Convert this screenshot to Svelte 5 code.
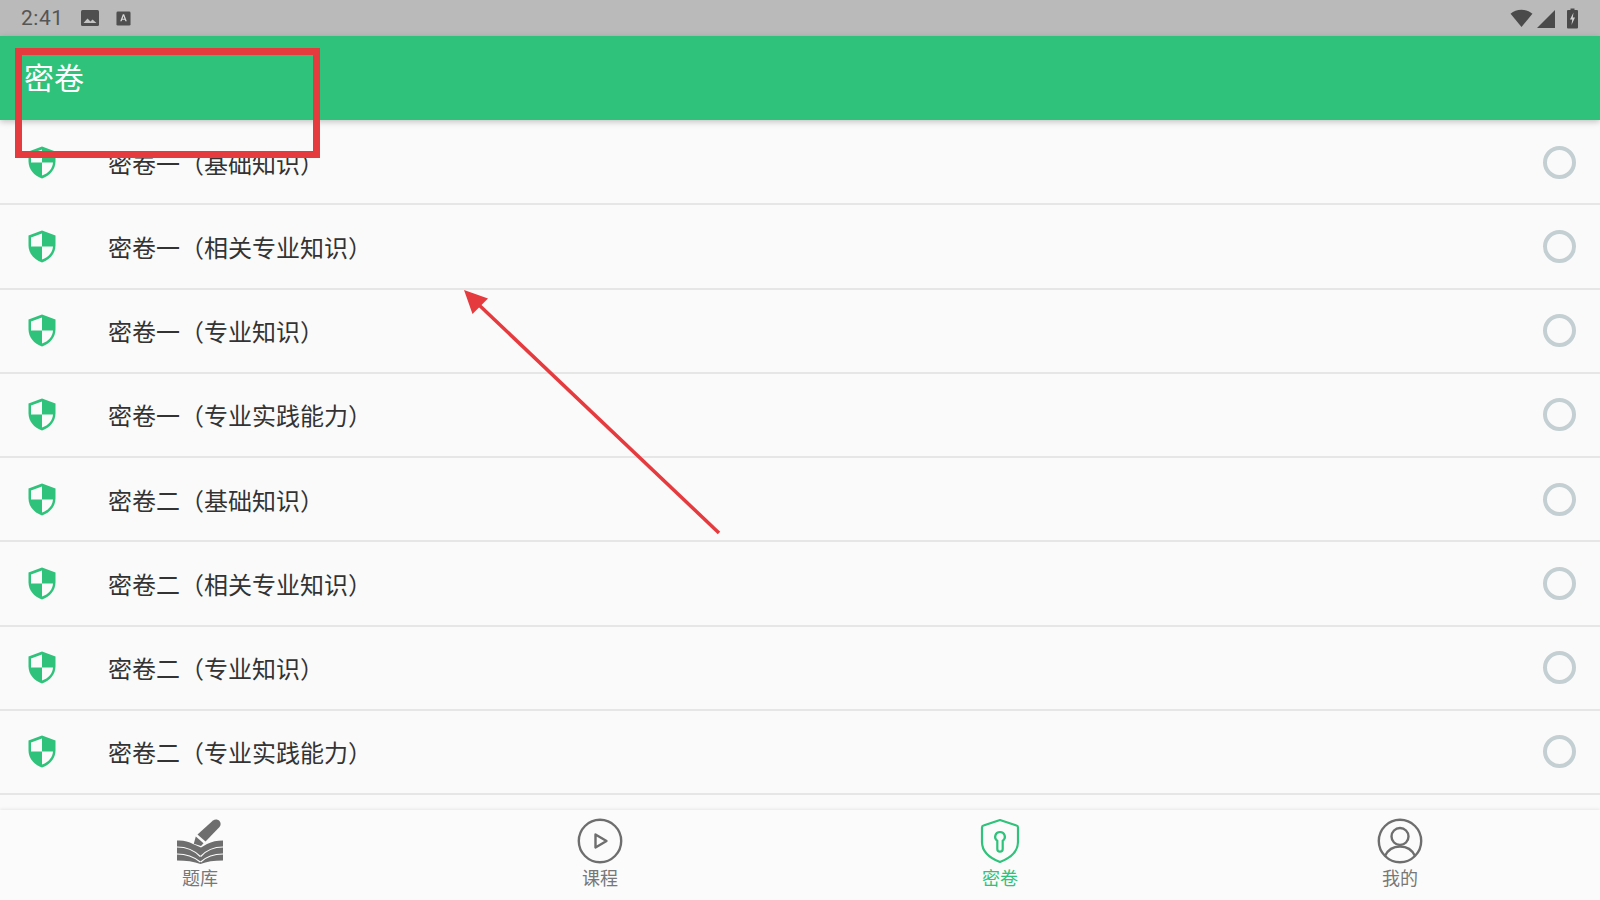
<script>
	const papers = [
		"密卷一（基础知识）",
		"密卷一（相关专业知识）",
		"密卷一（专业知识）",
		"密卷一（专业实践能力）",
		"密卷二（基础知识）",
		"密卷二（相关专业知识）",
		"密卷二（专业知识）",
		"密卷二（专业实践能力）",
	];
</script>

<div class="screen">
	<div class="status">
		<span class="time">2:41</span>
		<svg class="s-img" viewBox="0 0 18 18">
			<rect width="18" height="16" y="1" rx="1.5" fill="#4f4f4f" />
			<path d="M2.5 14l4-4.5 3 3 2-2 4 3.500z" fill="#c4c4c4" />
		</svg>
		<svg class="s-a" viewBox="0 0 16 16">
			<rect width="15" height="15" x="0.5" y="0.5" rx="1.500" fill="#4f4f4f" />
			<path d="M4.500 11L7.300 3.500h1.400L11.500 11h-1.500L9.400 9.400H6.600L6 11zM7 8.200h2L8 5.300z" fill="#d8d8d8" />
		</svg>
		<span class="grow"></span>
		<svg class="s-wifi" viewBox="0 0 24 20">
			<path d="M0.500 5C3.500 2.200 7.500 0.800 12 0.800S20.500 2.200 23.500 5L12 19z" fill="#4a4a4a" />
		</svg>
		<svg class="s-signal" viewBox="0 0 18 18">
			<path d="M0 18L18 0v18z" fill="#4a4a4a" />
		</svg>
		<svg class="s-batt" viewBox="0 0 11 20">
			<path d="M3.500 0h4v1.500H10a1 1 0 0 1 1 1V19a1 1 0 0 1-1 1H1a1 1 0 0 1-1-1V2.500a1 1 0 0 1 1-1h2.500z" fill="#4a4a4a" />
			<path d="M6.500 4L3 11h2.200L4.500 16.500 8 9H5.800z" fill="#d0d0d0" />
		</svg>
	</div>

	<header class="bar"><span>密卷</span></header>

	<ul class="list">
		{#each papers as paper}
			<li class="row">
				<svg class="shield" viewBox="0 0 28 33">
					<path d="M14 0.500L27.500 5.500V15C27.500 23.500 22 29.500 14 32.500C6 29.500 0.500 23.500 0.500 15V5.500z" fill="#2fc27a" />
					<path d="M14 3.500V16.500H3V7.500zM14 16.500H25C24.600 22.500 20.500 27.200 14 29.600z" fill="#fbfbfb" />
				</svg>
				<span class="name">{paper}</span>
				<span class="radio"></span>
			</li>
		{/each}
	</ul>

	<nav class="tabs">
		<div class="tab">
			<svg class="ico" viewBox="0 0 46 46">
				<path d="M36 2.500C38 1 41 1.300 42.500 3C44 4.800 44 7.300 42.500 9L28.500 23.500L20.500 16.500z" fill="#6e6e6e" />
				<path d="M18.800 18.500L26.500 25.300L24 28L16.800 25.800z" fill="#6e6e6e" />
				<path d="M0 22.500C6 22 11.500 23.500 16 26L24 29.500L30 26C35 23.500 40 22.500 46 22.500V42.500C37 42.500 29.500 43.500 23.500 46C17 43.500 9 42.500 0 42.500z" fill="#6e6e6e" />
				<path d="M0 29C9 29 17 32 23.300 38.500M46 29C37 29 29.500 32 23.700 38.500M0 36C8 36 16 38 23.300 44M46 36C38 36 30 38 23.700 44" fill="none" stroke="#fbfbfb" stroke-width="1.200" />
			</svg>
			<span>题库</span>
		</div>
		<div class="tab">
			<svg class="ico" viewBox="0 0 46 46">
				<circle cx="23" cy="23" r="21.200" fill="none" stroke="#6e6e6e" stroke-width="2.400" />
				<path d="M18.500 16.500L29.500 23L18.500 29.500z" fill="none" stroke="#6e6e6e" stroke-width="2.400" stroke-linejoin="round" />
			</svg>
			<span>课程</span>
		</div>
		<div class="tab active">
			<svg class="ico" viewBox="0 0 46 46">
				<path d="M23 2L39.500 7.500C40.500 7.800 41 8.500 41 9.500V24C41 33 33.500 40 23 44C12.500 40 5 33 5 24V9.500C5 8.500 5.500 7.800 6.500 7.500z" fill="none" stroke="#2fc27a" stroke-width="2.200" stroke-linejoin="round" />
				<path d="M23 14a4.800 4.800 0 0 1 2.700 8.800V31a2.700 2.700 0 0 1-5.400 0V22.800A4.800 4.800 0 0 1 23 14z" fill="none" stroke="#2fc27a" stroke-width="2.200" />
			</svg>
			<span>密卷</span>
		</div>
		<div class="tab">
			<svg class="ico" viewBox="0 0 46 46">
				<circle cx="23" cy="23" r="21.200" fill="none" stroke="#6e6e6e" stroke-width="2.400" />
				<circle cx="23" cy="18.500" r="8.500" fill="none" stroke="#6e6e6e" stroke-width="2.400" />
				<path d="M8 38C11 31.500 16 28.500 23 28.500S35 31.500 38 38" fill="none" stroke="#6e6e6e" stroke-width="2.400" />
			</svg>
			<span>我的</span>
		</div>
	</nav>

	<div class="note-box"></div>
	<svg class="note-arrow" viewBox="0 0 1600 900">
		<line x1="719" y1="533" x2="478" y2="304" stroke="#e53a3e" stroke-width="3.500" />
		<path d="M464 290L488 298.500L472.500 314z" fill="#e53a3e" />
	</svg>
</div>

<style>
	:global(body) {
		margin: 0;
	}
	.screen {
		position: relative;
		display: flex;
		flex-direction: column;
		width: 1600px;
		height: 900px;
		overflow: hidden;
		background: #fafafa;
		font-family: "Noto Sans CJK SC", "Noto Sans", sans-serif;
	}
	.status {
		display: flex;
		align-items: center;
		height: 36px;
		flex: none;
		padding: 0 22px 0 21px;
		background: #bababa;
		color: #555;
		box-sizing: border-box;
	}
	.time {
		font-family: Roboto, sans-serif;
		font-size: 21px;
		letter-spacing: 0.5px;
	}
	.s-img {
		width: 18px;
		height: 18px;
		margin-left: 17px;
	}
	.s-a {
		width: 15px;
		height: 15px;
		margin-left: 17px;
	}
	.grow {
		flex: 1;
	}
	.s-wifi {
		width: 23px;
		height: 19px;
	}
	.s-signal {
		width: 18px;
		height: 18px;
		margin-left: 4px;
		margin-top: 1px;
	}
	.s-batt {
		width: 11px;
		height: 21px;
		margin-left: 12px;
	}
	.bar {
		display: flex;
		align-items: center;
		flex: none;
		height: 84px;
		box-sizing: border-box;
		padding: 0 0 4px 24px;
		background: #2fc27a;
		color: #fff;
		font-size: 30px;
		box-shadow: 0 2px 6px rgba(0, 0, 0, 0.22);
		position: relative;
		z-index: 1;
	}
	.list {
		list-style: none;
		margin: 0;
		padding: 1px 0 0;
		flex: none;
	}
	.row {
		display: flex;
		align-items: center;
		height: 84.25px;
		box-sizing: border-box;
		padding: 0 24px 0 28px;
		border-bottom: 2px solid #e6e6e6;
	}
	.shield {
		width: 28px;
		height: 33px;
		flex: none;
	}
	.name {
		flex: 1;
		margin-left: 52px;
		font-size: 24px;
		color: #333;
	}
	.radio {
		width: 33px;
		height: 33px;
		flex: none;
		box-sizing: border-box;
		border: 4.5px solid #c3cfd2;
		border-radius: 50%;
	}
	.tabs {
		display: grid;
		grid-template-columns: repeat(4, 1fr);
		margin-top: auto;
		height: 90px;
		box-sizing: border-box;
		padding-top: 8px;
		background: #fbfbfb;
		box-shadow: 0 -1px 3px rgba(0, 0, 0, 0.08);
	}
	.tab {
		display: flex;
		flex-direction: column;
		align-items: center;
		color: #777;
		font-size: 18px;
		line-height: 24px;
	}
	.tab.active {
		color: #2fc27a;
	}
	.ico {
		width: 46px;
		height: 46px;
		flex: none;
		margin-bottom: 1px;
	}
	.note-box {
		position: absolute;
		left: 15px;
		top: 48px;
		width: 305px;
		height: 110px;
		box-sizing: border-box;
		border: 7px solid #e53a3e;
		z-index: 2;
	}
	.note-arrow {
		position: absolute;
		left: 0;
		top: 0;
		width: 1600px;
		height: 900px;
		z-index: 2;
		pointer-events: none;
	}
</style>
